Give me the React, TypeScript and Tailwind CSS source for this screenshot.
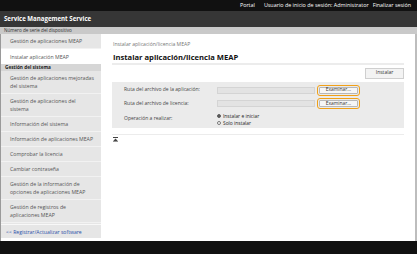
const sideItems: { label: string[]; kind?: "selected" | "header" }[] = [
  { label: ["Gestión de aplicaciones MEAP"] },
  { label: ["Instalar aplicación MEAP"], kind: "selected" },
  { label: ["Gestión del sistema"], kind: "header" },
  { label: ["Gestión de aplicaciones mejoradas", "del sistema"] },
  { label: ["Gestión de aplicaciones del", "sistema"] },
  { label: ["Información del sistema"] },
  { label: ["Información de aplicaciones MEAP"] },
  { label: ["Comprobar la licencia"] },
  { label: ["Cambiar contraseña"] },
  { label: ["Gestión de la información de", "opciones de aplicaciones MEAP"] },
  { label: ["Gestión de registros de", "aplicaciones MEAP"] },
];

const SideItem = ({ label, kind }: { label: string[]; kind?: "selected" | "header" }) => {
  if (kind === "header") {
    return (
      <div className="h-[7px] bg-[#d6d6d6] pl-[4px] flex items-center text-[4.7px] font-bold text-[#222]">
        {label[0]}
      </div>
    );
  }
  const two = label.length > 1;
  return (
    <div
      className={`${two ? "h-[23px]" : "h-[15px]"} ${
        kind === "selected" ? "bg-white" : "border-b border-[#f2f2f2]"
      } pl-[9px] flex flex-col justify-center text-[5.2px] leading-[8px] text-[#555]`}
    >
      {label.map((l) => (
        <span key={l}>{l}</span>
      ))}
    </div>
  );
};

const Examinar = () => (
  <div className="rounded-[3px] border border-[#f0a018] p-[1px] ml-[2px]">
    <div className="w-[39px] h-[7px] bg-[#f6f6f6] border border-[#b8b8b8] rounded-[1px] flex items-center justify-center text-[4.9px] text-[#333]">
      Examinar...
    </div>
  </div>
);

export default function App() {
  return (
    <div
      className="w-[417px] h-[254px] overflow-hidden flex flex-col bg-white"
      style={{ fontFamily: '"Open Sans", "Noto Sans", sans-serif' }}
    >
      <div className="h-[11px] bg-[#111] flex items-center justify-end gap-[4px] pr-[6px] text-[5.4px] text-white">
        <span className="mr-[5px]">Portal</span>
        <span>Usuario de inicio de sesión: Administrator</span>
        <span>Finalizar sesión</span>
      </div>
      <div className="h-[16px] bg-[#363636] flex items-center pl-[4px] text-[6.1px] font-bold text-white">
        Service Management Service
      </div>
      <div className="h-[7px] bg-[#c9c9c9] flex items-center pl-[4px] text-[4.6px] text-[#333]">
        Número de serie del dispositivo
      </div>

      <div className="flex h-[207px]">
        <div className="w-[101px] bg-[#e6e6e6] border-l border-[#9a9a9a] flex flex-col">
          {sideItems.map((it) => (
            <SideItem key={it.label[0]} {...it} />
          ))}
          <div className="mt-[1px] border-t border-[#f8f8f8] h-[14px] flex items-end pb-[1px] pl-[5px] text-[5.1px] text-[#2a4fa8]">
            &lt;&lt; Registrar/Actualizar software
          </div>
          <div className="flex-1 bg-white" />
        </div>

        <div className="flex-1 px-[11px] pt-[7px]">
          <div className="pl-[1px] text-[5.1px] text-[#777]">Instalar aplicación/licencia MEAP</div>
          <div className="pl-[1px] mt-[3px] text-[7.6px] font-bold text-[#111] leading-[10px]">
            Instalar aplicación/licencia MEAP
          </div>
          <div className="h-[2px] bg-[#ececec] mt-[1px]" />
          <div className="flex justify-end mt-[3px]">
            <div className="w-[39px] h-[11px] bg-[#f3f3f3] border border-[#cfcfcf] flex items-center justify-center text-[5px] text-[#333]">
              Instalar
            </div>
          </div>
          <div className="mt-[3px] bg-[#ebebeb] h-[46px] pl-[12px] pt-[2px] text-[5px] text-[#444]">
            <div className="flex items-center h-[13px]">
              <span className="w-[93px]">Ruta del archivo de la aplicación:</span>
              <div className="w-[98px] h-[7px] bg-[#e3e3e3] border border-[#d4d4d4]" />
              <Examinar />
            </div>
            <div className="flex items-center h-[14px]">
              <span className="w-[93px]">Ruta del archivo de licencia:</span>
              <div className="w-[98px] h-[7px] bg-[#e3e3e3] border border-[#d4d4d4]" />
              <Examinar />
            </div>
            <div className="flex items-start h-[14px] pt-[2px]">
              <span className="w-[93px] pt-[2px]">Operación a realizar:</span>
              <div className="flex flex-col text-[4.9px] text-[#222] leading-[7px]">
                <div className="flex items-center gap-[2px]">
                  <span className="w-[4px] h-[4px] rounded-full border border-[#555] bg-white flex items-center justify-center">
                    <span className="w-[2px] h-[2px] rounded-full bg-[#333]" />
                  </span>
                  Instalar e iniciar
                </div>
                <div className="flex items-center gap-[2px]">
                  <span className="w-[4px] h-[4px] rounded-full border border-[#777] bg-white" />
                  Solo instalar
                </div>
              </div>
            </div>
          </div>
          <div className="h-[1px] bg-[#ececec] mt-[6px]" />
          <div className="mt-[2px] ml-[1px] w-[5px] h-[5px]">
            <svg viewBox="0 0 5 5" width="5" height="5">
              <rect x="0" y="0" width="5" height="1" fill="#444" />
              <polygon points="2.5,1.5 5,4.2 0,4.2" fill="#444" />
              <rect x="0" y="4.2" width="5" height="0.8" fill="#888" />
            </svg>
          </div>
        </div>
        <div className="w-[2px] bg-[#bdbdbd]" />
      </div>
      <div className="flex-1 bg-[#111]" />
    </div>
  );
}
